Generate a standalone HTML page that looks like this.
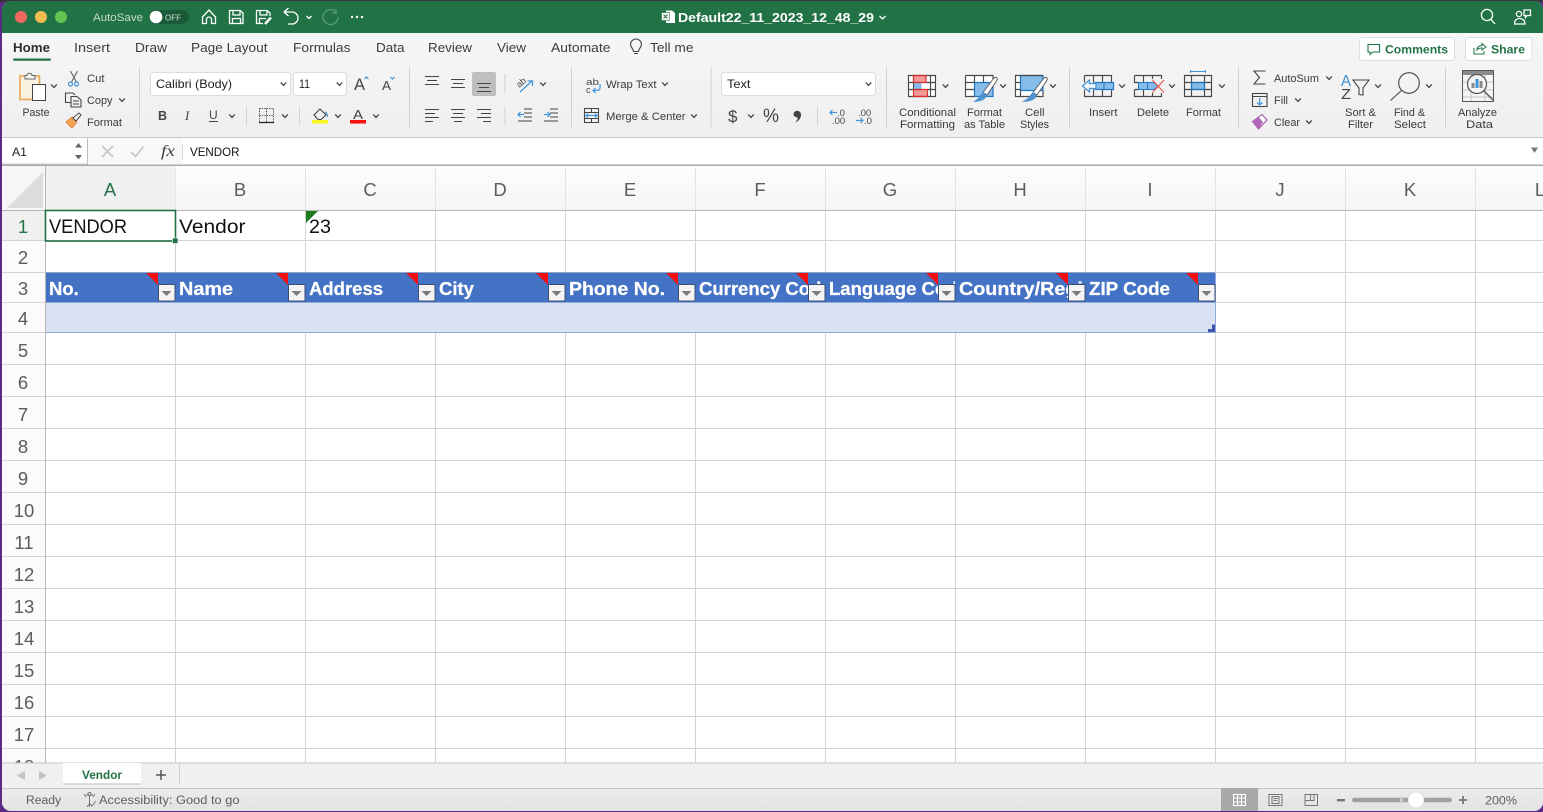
<!DOCTYPE html>
<html><head><meta charset="utf-8"><title>Excel</title>
<style>
html,body{margin:0;padding:0;background:#5b2a86;overflow:hidden}
svg{display:block}
text{font-family:"Liberation Sans",sans-serif;fill:#333}
.r{font-size:11px;fill:#3a3a3a}
.t{font-size:13px;fill:#3c3c3c}
.h{font-size:18.5px;fill:#5c5c5c;text-anchor:middle}
.b{font-size:18.5px;font-weight:bold;fill:#fff;stroke:#fff;stroke-width:.25}
.c{font-size:19.5px;fill:#111}
.i{fill:none;stroke:#444;stroke-width:1.1}
.bl{fill:none;stroke:#3f93d8;stroke-width:1.2}
.g{fill:none;stroke:#484848;stroke-width:1.15}
.sep{stroke:#d0d0d0;stroke-width:1}
.w{fill:none;stroke:#fff;stroke-width:1.3}
</style></head><body>
<svg width="1543" height="812" viewBox="0 0 1543 812" xmlns="http://www.w3.org/2000/svg">
<defs>
<path id="ch" d="M-2.8 -1.6L0 1.4L2.8 -1.6" fill="none" stroke="#444" stroke-width="1.3"/>
<linearGradient id="hd" x1="0" y1="0" x2="0" y2="1"><stop offset="0" stop-color="#fdfdfd"/><stop offset="1" stop-color="#f5f5f5"/></linearGradient>
<linearGradient id="rb" x1="0" y1="0" x2="0" y2="1"><stop offset="0" stop-color="#f6f6f6"/><stop offset="1" stop-color="#efefef"/></linearGradient>
<linearGradient id="st" x1="0" y1="0" x2="0" y2="1"><stop offset="0" stop-color="#ececec"/><stop offset="1" stop-color="#e2e2e2"/></linearGradient>
<clipPath id="win"><rect x="2" y="1" width="1541" height="810" rx="9"/></clipPath>
<clipPath id="cF"><rect x="695" y="273" width="130" height="30"/></clipPath>
<clipPath id="cG"><rect x="825" y="273" width="130" height="30"/></clipPath>
<clipPath id="cH"><rect x="955" y="273" width="130" height="30"/></clipPath>
<g id="fb"><rect x="0.5" y="0.5" width="16.5" height="16.5" fill="#f4f4f4" stroke="#3d4f72"/><path d="M3.5 7H13.5L8.5 12Z" fill="#7b7b7b"/></g>
<path id="red" d="M0 0H12V12Z" fill="#f40f0f"/>
</defs>
<rect width="1543" height="812" fill="#5b2a86"/>
<rect width="1543" height="2" fill="#33363a"/>
<g clip-path="url(#win)">
<rect x="2" y="1" width="1541" height="810" fill="#fff"/>
<!-- title bar -->
<rect x="2" y="1" width="1541" height="32" fill="#217346"/>
<circle cx="21" cy="17" r="6" fill="#ee6a5f"/><circle cx="41" cy="17" r="6" fill="#f5bd4f"/><circle cx="61" cy="17" r="6" fill="#61c454"/>
<text x="93" y="21" font-size="11" textLength="50" lengthAdjust="spacingAndGlyphs" style="fill:#c6dacd">AutoSave</text>
<rect x="149" y="10" width="40" height="14" rx="7" fill="#1b5a38"/><circle cx="156" cy="17" r="6.3" fill="#fff"/>
<text x="165" y="20.5" font-size="8.5" textLength="16" lengthAdjust="spacingAndGlyphs" style="fill:#cfe0d6">OFF</text>
<path class="w" d="M202.5 17L209 10L215.5 17V23.5H211.5V19.5A2.5 2.5 0 0 0 206.5 19.5V23.5H202.5Z"/>
<path class="w" d="M229.5 10.5H240L243 13V23.5H229.5ZM233 10.5V15H240V10.5M232.5 23.5V18.5H240.5V23.5"/>
<path class="w" d="M256.5 10.5H267L270 13V16M256.5 10.5V23.5H263M260 10.5V15H267V10.5M259.5 23.5V18.5H266"/>
<path d="M265 24L271 17.5" stroke="#fff" stroke-width="2.4"/>
<path class="w" d="M284 12H292A6 6 0 0 1 292 24H288M284 12L288.5 8M284 12L288.5 16"/>
<path d="M306.5 16L309 18.5L311.5 16" fill="none" stroke="#fff" stroke-width="1.3"/>
<path d="M336 12A7.5 7.5 0 1 0 338 17M336 9V13H332" fill="none" stroke="#5f9c7a" stroke-width="1.2"/>
<circle cx="352" cy="17" r="1.2" fill="#fff"/><circle cx="357" cy="17" r="1.2" fill="#fff"/><circle cx="362" cy="17" r="1.2" fill="#fff"/>
<path d="M666 10.5H672L675 13V23H666Z" fill="#fff"/><rect x="661.5" y="12.5" width="8" height="8" fill="#fff" stroke="#217346" stroke-width=".6"/><path d="M663.5 14.5L667.5 18.5M667.5 14.5L663.5 18.5" stroke="#217346"/>
<text x="678" y="22" font-size="13" font-weight="bold" textLength="196" lengthAdjust="spacingAndGlyphs" style="fill:#fff">Default22_11_2023_12_48_29</text>
<path d="M879.5 16L882.5 19L885.5 16" fill="none" stroke="#fff" stroke-width="1.3"/>
<circle cx="1487" cy="15" r="5.6" class="w"/><path class="w" d="M1491 19.5L1495 24"/>
<circle cx="1519" cy="14" r="2.6" class="w"/><path class="w" d="M1514.5 24H1525C1525 20 1522 18.5 1519.5 18.5S1514.5 20 1514.5 24ZM1524 10H1530.5V15.5H1527L1525.5 17.5V15.5H1524Z"/>
<!-- ribbon -->
<rect x="2" y="33" width="1541" height="104" fill="url(#rb)"/>
<rect x="2" y="137" width="1541" height="1" fill="#c9c9c9"/>
<text class="t" x="13" y="52" font-weight="bold" textLength="37" lengthAdjust="spacingAndGlyphs" style="fill:#2e2e2e">Home</text>
<text class="t" x="74" y="52" textLength="36" lengthAdjust="spacingAndGlyphs">Insert</text>
<text class="t" x="135" y="52" textLength="32" lengthAdjust="spacingAndGlyphs">Draw</text>
<text class="t" x="191" y="52" textLength="76.5" lengthAdjust="spacingAndGlyphs">Page Layout</text>
<text class="t" x="293" y="52" textLength="57.5" lengthAdjust="spacingAndGlyphs">Formulas</text>
<text class="t" x="376" y="52" textLength="28.5" lengthAdjust="spacingAndGlyphs">Data</text>
<text class="t" x="428" y="52" textLength="44" lengthAdjust="spacingAndGlyphs">Review</text>
<text class="t" x="497" y="52" textLength="29" lengthAdjust="spacingAndGlyphs">View</text>
<text class="t" x="551" y="52" textLength="59.5" lengthAdjust="spacingAndGlyphs">Automate</text>
<text class="t" x="650" y="52" textLength="43.5" lengthAdjust="spacingAndGlyphs">Tell me</text>
<rect x="13" y="58.5" width="38" height="2.2" rx="1" fill="#217346"/>
<path class="i" d="M633.5 51.5C633.5 48.5 630.5 47.5 630.5 44.5A5.5 5.5 0 0 1 641.5 44.5C641.5 47.5 638.5 48.5 638.5 51.5ZM634 53.5H638"/>
<rect x="1359.5" y="37.5" width="95" height="23" rx="3" fill="#fff" stroke="#dedede"/>
<path d="M1368 44.5H1379.5V52H1373L1370 54.5V52H1368Z" fill="none" stroke="#217346" stroke-width="1.1"/>
<text x="1385" y="53.5" font-size="12" font-weight="bold" textLength="63" lengthAdjust="spacingAndGlyphs" style="fill:#217346">Comments</text>
<rect x="1465.5" y="37.5" width="66.5" height="23" rx="3" fill="#fff" stroke="#dedede"/>
<path d="M1474 48V54H1484V51M1477 50C1477 46.5 1480 45.5 1482 45.5V43.5L1486 47L1482 50V48C1480 48 1478 48.5 1477 50Z" fill="none" stroke="#217346" stroke-width="1"/>
<text x="1491" y="53.5" font-size="12" font-weight="bold" textLength="34" lengthAdjust="spacingAndGlyphs" style="fill:#217346">Share</text>
<!-- clipboard -->
<rect x="20" y="76" width="19.5" height="23.5" fill="#fbf1df" stroke="#e9a553" stroke-width="1.6"/>
<path d="M25 79V75.5H27C27 72.5 32 72.5 32 75.5H35V79Z" fill="#f4f4f4" stroke="#666"/>
<rect x="32.5" y="84.5" width="13" height="16" fill="#fff" stroke="#444"/>
<use href="#ch" x="54" y="86"/>
<text class="r" x="22.5" y="116" textLength="27" lengthAdjust="spacingAndGlyphs">Paste</text>
<path d="M70.5 71L76.5 82M77.5 71L71.5 82" stroke="#555" fill="none"/><circle cx="70.5" cy="84" r="2" class="bl"/><circle cx="76.5" cy="84" r="2" class="bl"/>
<text class="r" x="87" y="82" textLength="17.5" lengthAdjust="spacingAndGlyphs">Cut</text>
<path class="i" d="M70.5 102.5H65.5V93H73L75 95M71 96.5H77L81 100V107H71ZM73 101H79M73 104H79"/>
<text class="r" x="87" y="104" textLength="25.5" lengthAdjust="spacingAndGlyphs">Copy</text><use href="#ch" x="122" y="100"/>
<path d="M66 122L72 117L77 122L72 128Z" fill="#f3a457" stroke="#e8853a"/>
<path d="M73 118L79 113L81 115L76 121Z" fill="#fff" stroke="#444"/>
<text class="r" x="87" y="126" textLength="35" lengthAdjust="spacingAndGlyphs">Format</text>
<line class="sep" x1="139.5" y1="67" x2="139.5" y2="128"/>
<!-- font -->
<rect x="150.5" y="72.5" width="140" height="23" rx="3" fill="#fff" stroke="#dcdcdc"/>
<text x="156" y="88" font-size="12" textLength="76" lengthAdjust="spacingAndGlyphs" style="fill:#222">Calibri (Body)</text><use href="#ch" x="283.5" y="84"/>
<rect x="293.5" y="72.5" width="53" height="23" rx="3" fill="#fff" stroke="#dcdcdc"/>
<text x="299" y="88" font-size="12" textLength="11" lengthAdjust="spacingAndGlyphs" style="fill:#222">11</text><use href="#ch" x="339.5" y="84"/>
<text x="354" y="90" font-size="17" textLength="11" lengthAdjust="spacingAndGlyphs" style="fill:#444">A</text><path d="M364.5 79L366.5 77L368.5 79" class="bl"/>
<text x="382" y="90" font-size="13" textLength="9" lengthAdjust="spacingAndGlyphs" style="fill:#444">A</text><path d="M390.5 77L392.5 79L394.5 77" class="bl"/>
<text x="158" y="120" font-size="12.5" font-weight="bold" style="fill:#444">B</text>
<text x="185" y="120" font-size="13" font-style="italic" style="fill:#444;font-family:'Liberation Serif',serif">I</text>
<text x="209" y="119" font-size="12" style="fill:#444">U</text><line x1="209" y1="121.5" x2="218" y2="121.5" stroke="#444"/>
<use href="#ch" x="232" y="116"/>
<line class="sep" x1="246.5" y1="107" x2="246.5" y2="125"/>
<path d="M259.5 108.5H273.5V122M259.5 108.5V122M266.5 108.5V122M259.5 115.5H273.5" fill="none" stroke="#444" stroke-dasharray="1.2 1.2"/><line x1="259" y1="122.5" x2="274" y2="122.5" stroke="#222" stroke-width="1.2"/>
<use href="#ch" x="285" y="116"/>
<line class="sep" x1="299.5" y1="107" x2="299.5" y2="125"/>
<path class="i" d="M314 115L320 109L326 115L321 119.5H318Z"/><path d="M325 112C327 113 327.5 115 327.5 117" class="bl"/>
<rect x="312" y="120" width="16" height="3.6" fill="#fbf424"/><use href="#ch" x="338" y="116"/>
<text x="353" y="119" font-size="13" textLength="10" lengthAdjust="spacingAndGlyphs" style="fill:#444">A</text><rect x="350" y="120" width="16" height="3.6" fill="#f81414"/><use href="#ch" x="376" y="116"/>
<line class="sep" x1="409.5" y1="67" x2="409.5" y2="128"/>
<!-- alignment -->
<rect x="472" y="72" width="24" height="24" rx="2" fill="#bfbfbf"/>
<path class="i" d="M425 76.5H439M427 80.5H437M425 84.5H439M451 79.5H465M453 83.5H463M451 87.5H465M477 83.5H491M479 87.5H489M477 91.5H491"/>
<path class="i" d="M425 109.5H439M425 113.5H435M425 117.5H439M425 121.5H433M451 109.5H465M453 113.5H463M451 117.5H465M454 121.5H462M477 109.5H491M481 113.5H491M477 117.5H491M483 121.5H491"/>
<line class="sep" x1="505" y1="74" x2="505" y2="93"/><line class="sep" x1="505" y1="107" x2="505" y2="125"/>
<text x="517" y="86" font-size="9" transform="rotate(-40 521 84)" style="fill:#444">ab</text><path class="bl" d="M520 92L532 81M527.5 81H532.5V86"/>
<use href="#ch" x="543" y="84"/>
<path class="i" d="M524 109H532M524 113H532M524 117H532M518 121H532"/><path class="bl" d="M518 114.5H524M520.5 112L518 114.5L520.5 117"/>
<path class="i" d="M550 109H558M550 113H558M550 117H558M544 121H558"/><path class="bl" d="M544 114.5H550M547.5 112L550 114.5L547.5 117"/>
<line class="sep" x1="571.5" y1="67" x2="571.5" y2="128"/>
<text x="586" y="85" font-size="9.5" textLength="13" lengthAdjust="spacingAndGlyphs" style="fill:#444">ab</text><text x="586" y="93" font-size="9.5" style="fill:#444">c</text><path class="bl" d="M600 84V88C600 90 598 90.5 596 90.5H593M595.5 88L593 90.5L595.5 93"/>
<text class="r" x="606" y="88" textLength="50.5" lengthAdjust="spacingAndGlyphs">Wrap Text</text><use href="#ch" x="665" y="84"/>
<path class="i" d="M584.5 108.5H598.5V122.5H584.5ZM584.5 112.5H598.5M584.5 118.5H598.5M591.5 108.5V112.5M591.5 118.5V122.5"/><path class="bl" d="M586 115.5H597M588 113.5L586 115.5L588 117.5M595 113.5L597 115.5L595 117.5"/>
<text class="r" x="606" y="120" textLength="79.5" lengthAdjust="spacingAndGlyphs">Merge &amp; Center</text><use href="#ch" x="694" y="116"/>
<line class="sep" x1="711" y1="67" x2="711" y2="128"/>
<!-- number -->
<rect x="721.5" y="72.5" width="154" height="23" rx="3" fill="#fff" stroke="#dcdcdc"/>
<text x="727" y="88" font-size="12" textLength="23.5" lengthAdjust="spacingAndGlyphs" style="fill:#222">Text</text><use href="#ch" x="868.5" y="84"/>
<text x="728" y="122" font-size="17" style="fill:#444">$</text><use href="#ch" x="751" y="116"/>
<text x="763" y="122" font-size="19" textLength="16" lengthAdjust="spacingAndGlyphs" style="fill:#444">%</text>
<path d="M793.5 114A3.6 3.6 0 1 1 801 115C801 118 799 121 795 122.5C797.5 120 798 118.5 797.5 117.5C795.5 117.5 793.5 116 793.5 114Z" fill="#444"/>
<line class="sep" x1="817.5" y1="107" x2="817.5" y2="125"/>
<text x="837" y="116" font-size="9.5" style="fill:#444">.0</text><text x="832" y="124" font-size="9.5" style="fill:#444">.00</text><path class="bl" d="M830 112.5H837M832.5 110L830 112.5L832.5 115"/>
<text x="858" y="116" font-size="9.5" style="fill:#444">.00</text><text x="864" y="124" font-size="9.5" style="fill:#444">.0</text><path class="bl" d="M856 120.5H863M860.5 118L863 120.5L860.5 123"/>
<line class="sep" x1="886.5" y1="67" x2="886.5" y2="128"/>
<!-- conditional -->
<rect x="908.5" y="75.5" width="27" height="21" fill="#fff"/>
<rect x="913.5" y="75.5" width="12.5" height="7" fill="#f89a9a"/><rect x="913.5" y="89.5" width="14" height="7" fill="#f89a9a"/><rect x="913.5" y="82.5" width="8" height="7" fill="#85bce9"/>
<path class="g" d="M908.5 75.5H935.5V96.5H908.5ZM908.5 82.5H913.5M926 82.5H935.5M921.5 89.5H913.5M927.5 89.5H935.5M908.5 89.5H913.5M930.5 75.5V96.5"/>
<path d="M913.5 75.5H926V82.5H913.5ZM913.5 89.5H927.5V96.5H913.5Z" fill="none" stroke="#d9302e" stroke-width="1.2"/>
<path d="M913.5 82.5V89.5" stroke="#484848"/>
<use href="#ch" x="945.5" y="86"/>
<text class="r" x="899" y="116" textLength="57" lengthAdjust="spacingAndGlyphs">Conditional</text><text class="r" x="900" y="128" textLength="55" lengthAdjust="spacingAndGlyphs">Formatting</text>
<rect x="965.5" y="75.5" width="27.5" height="21" fill="#fff"/>
<rect x="974.5" y="82.5" width="18.5" height="14" fill="#85bce9" stroke="#1f76c4" stroke-width="1.2"/>
<path class="g" d="M965.5 75.5H993V82.5M965.5 75.5V96.5H974.5M965.5 82.5H974.5M965.5 89.5H974.5M974.5 75.5V82.5M983.5 75.5V82.5"/>
<path d="M983 92.5L993.5 78.5Q995.5 76.5 996.8 77.7Q998 79 996.5 81L987 95Z" fill="#fff" stroke="#555" stroke-width=".9"/>
<path d="M973 101.5C977 102.5 985 101 987 95.5L983.5 92C980 93.5 980 98.5 973 101.5Z" fill="#4e93d0"/>
<use href="#ch" x="1003" y="86"/>
<text class="r" x="967" y="116" textLength="35" lengthAdjust="spacingAndGlyphs">Format</text><text class="r" x="964" y="128" textLength="41" lengthAdjust="spacingAndGlyphs">as Table</text>
<rect x="1015.5" y="75.5" width="27.5" height="21" fill="#fff"/>
<rect x="1020.5" y="75.5" width="22.5" height="15" fill="#85bce9" stroke="#1f76c4" stroke-width="1.2"/>
<path class="g" d="M1020.5 75.5H1015.5V96.5H1043V90.5M1015.5 82.5H1020.5M1015.5 89.5H1020.5M1020.5 90.5V96.5M1043 75.5H1020.5"/>
<path d="M1033 92.5L1043.5 78.5Q1045.5 76.5 1046.8 77.7Q1048 79 1046.5 81L1037 95Z" fill="#fff" stroke="#555" stroke-width=".9"/>
<path d="M1022 101.5C1026 102.5 1035 101 1037 95.5L1033.5 92C1030 93.5 1030 98.5 1022 101.5Z" fill="#4e93d0"/>
<use href="#ch" x="1053" y="86"/>
<text class="r" x="1025" y="116" textLength="19.5" lengthAdjust="spacingAndGlyphs">Cell</text><text class="r" x="1020" y="128" textLength="29" lengthAdjust="spacingAndGlyphs">Styles</text>
<line class="sep" x1="1069.5" y1="67" x2="1069.5" y2="128"/>
<!-- insert -->
<path class="g" d="M1084.5 75.5H1111.5V82.5M1084.5 75.5V82.5M1084.5 89.5V96.5H1111.5V89.5M1093.5 75.5V82.5M1102.5 75.5V82.5M1093.5 89.5V96.5M1102.5 89.5V96.5"/>
<rect x="1095" y="82.5" width="18.5" height="7" fill="#85bce9" stroke="#1f76c4" stroke-width="1.2"/>
<path d="M1104 82.5V89.5" stroke="#1f76c4"/>
<path d="M1082.5 86L1089.5 80V83.5H1096V88.5H1089.5V92Z" fill="#eef6fc" stroke="#3f93d8" stroke-width="1.2"/>
<use href="#ch" x="1122" y="86"/><text class="r" x="1089" y="116" textLength="28.5" lengthAdjust="spacingAndGlyphs">Insert</text>
<!-- delete -->
<path class="g" d="M1134.5 75.5H1161.5V79M1134.5 75.5V82.5H1138M1134.5 89.5H1138M1134.5 89.5V96.5H1161.5V93M1143.5 75.5V82.5M1152.5 75.5V79M1143.5 89.5V96.5M1152.5 93V96.5"/>
<path d="M1138.5 82.5H1154L1158 86L1154 89.5H1138.5Z" fill="#85bce9" stroke="#1f76c4"/>
<path d="M1147.5 82.5V89.5" stroke="#1f76c4"/>
<path d="M1152.5 80L1164 92.5M1164 80L1152.5 92.5" stroke="#ee5c4a" stroke-width="1.2"/>
<use href="#ch" x="1172" y="86"/><text class="r" x="1137" y="116" textLength="32" lengthAdjust="spacingAndGlyphs">Delete</text>
<!-- format -->
<path d="M1190.5 71.5H1205.5M1190.5 70V73M1205.5 70V73" stroke="#3f93d8" fill="none"/>
<rect x="1191.5" y="82.5" width="13" height="7" fill="#85bce9"/>
<path class="g" d="M1184.5 75.5H1211.5V96.5H1184.5ZM1184.5 82.5H1211.5M1184.5 89.5H1211.5M1191.5 75.5V96.5M1204.5 75.5V96.5"/>
<rect x="1191.5" y="82.5" width="13" height="7" fill="none" stroke="#1f76c4" stroke-width="1.2"/>
<use href="#ch" x="1222" y="86"/><text class="r" x="1186" y="116" textLength="35" lengthAdjust="spacingAndGlyphs">Format</text>
<line class="sep" x1="1238.5" y1="67" x2="1238.5" y2="128"/>
<!-- editing -->
<path class="i" d="M1265.5 71H1254L1259.5 77.5L1254 84H1265.5"/>
<text class="r" x="1274" y="82" textLength="45" lengthAdjust="spacingAndGlyphs">AutoSum</text><use href="#ch" x="1329" y="78"/>
<rect x="1252.5" y="93.5" width="14.5" height="13" class="i"/><path class="i" d="M1252.5 96.5H1267"/><path class="bl" d="M1259.7 98V105M1257 102.5L1259.7 105L1262.5 102.5"/>
<text class="r" x="1274" y="104" textLength="14" lengthAdjust="spacingAndGlyphs">Fill</text><use href="#ch" x="1298" y="100"/>
<path d="M1252.5 121.5L1262 114.5L1267 120L1258.5 129Z" fill="#fff" stroke="#a04aa8"/><path d="M1252.5 121.5L1258 116.5L1263 122L1258.5 129Z" fill="#b068b8"/>
<text class="r" x="1274" y="126" textLength="26" lengthAdjust="spacingAndGlyphs">Clear</text><use href="#ch" x="1309" y="122"/>
<text x="1341" y="86" font-size="16" textLength="10" lengthAdjust="spacingAndGlyphs" style="fill:#3f93d8">A</text><text x="1341" y="99" font-size="15" textLength="10" lengthAdjust="spacingAndGlyphs" style="fill:#444">Z</text>
<path class="i" d="M1353 80H1369L1363 88V95L1359 94.5V88Z"/><use href="#ch" x="1378" y="86"/>
<text class="r" x="1345" y="116" textLength="31" lengthAdjust="spacingAndGlyphs">Sort &amp;</text><text class="r" x="1348" y="128" textLength="25" lengthAdjust="spacingAndGlyphs">Filter</text>
<circle cx="1409" cy="83" r="10.3" class="i"/><path class="i" d="M1401.5 90.5L1390.5 100.5"/><use href="#ch" x="1429" y="86"/>
<text class="r" x="1394" y="116" textLength="31" lengthAdjust="spacingAndGlyphs">Find &amp;</text><text class="r" x="1394" y="128" textLength="32" lengthAdjust="spacingAndGlyphs">Select</text>
<line class="sep" x1="1445.5" y1="67" x2="1445.5" y2="128"/>
<rect x="1462.5" y="70.5" width="31" height="31" fill="#f5f5f5" stroke="#555"/><rect x="1463" y="71" width="30" height="4" fill="#8a8a8a"/>
<path d="M1463 82H1493M1463 90H1493M1463 97H1493M1471 75V101M1485 75V101" stroke="#c4c4c4" fill="none"/>
<circle cx="1477" cy="84" r="9.5" fill="#f5f5f5" stroke="#555" stroke-width="1.2"/><path d="M1484 91L1493 100" stroke="#555" stroke-width="1.4"/>
<rect x="1471.5" y="83" width="3" height="5" fill="#888"/><rect x="1475.5" y="79" width="3" height="9" fill="#3f93d8"/><rect x="1479.5" y="81" width="3" height="7" fill="#888"/>
<text class="r" x="1458" y="116" textLength="39" lengthAdjust="spacingAndGlyphs">Analyze</text><text class="r" x="1466" y="128" textLength="27" lengthAdjust="spacingAndGlyphs">Data</text>
<!-- formula bar -->
<rect x="2" y="138" width="1541" height="27" fill="#fff"/>
<rect x="87" y="138" width="1" height="26" fill="#bdbdbd"/><rect x="2" y="163.5" width="86" height="1" fill="#cfcfcf"/>
<rect x="88" y="138" width="94" height="26" fill="#f8f8f8"/>
<text x="12" y="156" font-size="12" textLength="15" lengthAdjust="spacingAndGlyphs" style="fill:#222">A1</text>
<path d="M75 147.5L78.5 143L82 147.5ZM75 155L78.5 159.5L82 155Z" fill="#666"/>
<path d="M102 146L113 157M113 146L102 157" stroke="#c6c6c6" stroke-width="1.6"/>
<path d="M131 152L135.5 156.5L143.5 146.5" fill="none" stroke="#c6c6c6" stroke-width="1.6"/>
<text x="161" y="156" font-size="16" font-style="italic" textLength="14" lengthAdjust="spacingAndGlyphs" style="font-family:'Liberation Serif',serif;fill:#444">fx</text>
<rect x="182" y="144" width="1" height="16" fill="#d6d6d6"/>
<text x="190" y="156" font-size="12" textLength="49.5" lengthAdjust="spacingAndGlyphs" style="fill:#111">VENDOR</text>
<path d="M1531 147.5H1538L1534.5 153Z" fill="#777"/>
<rect x="2" y="164.5" width="1541" height="1.5" fill="#a9a9a9"/>
<!-- headers -->
<rect x="2" y="166" width="1541" height="44" fill="url(#hd)"/>
<rect x="2" y="166" width="43" height="44" fill="#f6f6f6"/>
<path d="M7 208L43 172V208Z" fill="#dcdcdc"/>
<rect x="46" y="166" width="129" height="44" fill="#f0f0f0"/>
<rect x="2" y="210" width="43" height="553" fill="#fbfbfb"/>
<rect x="2" y="211" width="43" height="30" fill="#f0f0f0"/>
<!-- grid -->
<path d="M175.5 211V763M305.5 211V763M435.5 211V763M565.5 211V763M695.5 211V763M825.5 211V763M955.5 211V763M1085.5 211V763M1215.5 211V763M1345.5 211V763M1475.5 211V763" stroke="#d4d4d4" fill="none"/>
<path d="M175.5 168V210M305.5 168V210M435.5 168V210M565.5 168V210M695.5 168V210M825.5 168V210M955.5 168V210M1085.5 168V210M1215.5 168V210M1345.5 168V210M1475.5 168V210" stroke="#e3e3e3" fill="none"/>
<path d="M2 240.5H1543M2 272.5H1543M2 302.5H1543M2 332.5H1543M2 364.5H1543M2 396.5H1543M2 428.5H1543M2 460.5H1543M2 492.5H1543M2 524.5H1543M2 556.5H1543M2 588.5H1543M2 620.5H1543M2 652.5H1543M2 684.5H1543M2 716.5H1543M2 748.5H1543" stroke="#d4d4d4" fill="none"/>
<rect x="2" y="210" width="1541" height="1" fill="#b5b5b5"/>
<rect x="45" y="166" width="1" height="597" fill="#b5b5b5"/>
<text class="h" x="110" y="196" style="fill:#217346">A</text><text class="h" x="240" y="196">B</text><text class="h" x="370" y="196">C</text><text class="h" x="500" y="196">D</text><text class="h" x="630" y="196">E</text><text class="h" x="760" y="196">F</text><text class="h" x="890" y="196">G</text><text class="h" x="1020" y="196">H</text><text class="h" x="1150" y="196">I</text><text class="h" x="1280" y="196">J</text><text class="h" x="1410" y="196">K</text><text class="h" x="1540" y="196">L</text>
<text class="h" x="23" y="233" style="fill:#217346">1</text><text class="h" x="23" y="264">2</text><text class="h" x="23" y="295">3</text><text class="h" x="23" y="325">4</text><text class="h" x="23" y="357">5</text><text class="h" x="23" y="389">6</text><text class="h" x="23" y="421">7</text><text class="h" x="23" y="453">8</text><text class="h" x="23" y="485">9</text><text class="h" x="24" y="517">10</text><text class="h" x="24" y="549">11</text><text class="h" x="24" y="581">12</text><text class="h" x="24" y="613">13</text><text class="h" x="24" y="645">14</text><text class="h" x="24" y="677">15</text><text class="h" x="24" y="709">16</text><text class="h" x="24" y="741">17</text><text class="h" x="24" y="773">18</text>
<!-- cells -->
<text class="c" x="49" y="233" textLength="78" lengthAdjust="spacingAndGlyphs">VENDOR</text>
<text class="c" x="179" y="233" textLength="66.5" lengthAdjust="spacingAndGlyphs">Vendor</text>
<text class="c" x="309" y="233" textLength="22" lengthAdjust="spacingAndGlyphs">23</text>
<path d="M306 211H318L306 223Z" fill="#1d7a1d"/>
<rect x="45.5" y="210.5" width="130" height="30.5" fill="none" stroke="#217346" stroke-width="1.6"/>
<rect x="172.5" y="238" width="5.5" height="5.5" fill="#217346" stroke="#fff" stroke-width=".6"/>
<!-- table -->
<rect x="46" y="272.5" width="1170" height="30" fill="#4472c4"/>
<rect x="46" y="302.5" width="1170" height="30" fill="#d9e1f2"/>
<path d="M46 332.5H1215.5V272.5" fill="none" stroke="#8ea9db"/>
<text class="b" x="49" y="295">No.</text><text class="b" x="179" y="295" textLength="54" lengthAdjust="spacingAndGlyphs">Name</text><text class="b" x="309" y="295">Address</text><text class="b" x="439" y="295">City</text><text class="b" x="569" y="295" textLength="96" lengthAdjust="spacingAndGlyphs">Phone No.</text>
<g clip-path="url(#cF)"><text class="b" x="699" y="295">Currency Code</text></g>
<g clip-path="url(#cG)"><text class="b" x="829" y="295">Language Code</text></g>
<g clip-path="url(#cH)"><text class="b" x="959" y="295" textLength="148" lengthAdjust="spacingAndGlyphs">Country/Region</text></g>
<text class="b" x="1089" y="295" textLength="81" lengthAdjust="spacingAndGlyphs">ZIP Code</text>
<use href="#red" x="146" y="273"/><use href="#red" x="276" y="273"/><use href="#red" x="406" y="273"/><use href="#red" x="536" y="273"/><use href="#red" x="666" y="273"/><use href="#red" x="796" y="273"/><use href="#red" x="926" y="273"/><use href="#red" x="1056" y="273"/><use href="#red" x="1186" y="273"/>
<use href="#fb" x="158" y="284"/><use href="#fb" x="288" y="284"/><use href="#fb" x="418" y="284"/><use href="#fb" x="548" y="284"/><use href="#fb" x="678" y="284"/><use href="#fb" x="808" y="284"/><use href="#fb" x="938" y="284"/><use href="#fb" x="1068" y="284"/><use href="#fb" x="1198" y="284"/>
<path d="M1208 332H1215V324.5H1212V329H1208Z" fill="#3f56b0"/>
<!-- tabs -->
<rect x="2" y="763" width="1541" height="25" fill="#f0f0f0"/>
<rect x="2" y="762.5" width="1541" height="1" fill="#c6c6c6"/>
<path d="M25 771V780L16.5 775.5ZM39 771V780L47 775.5Z" fill="#c4c4c4"/>
<path d="M63 763H141V782A2 2 0 0 1 139 784H65A2 2 0 0 1 63 782Z" fill="#fff"/><path d="M63 784H141" stroke="#bdbdbd"/>
<text x="82" y="779" font-size="11.5" font-weight="bold" textLength="40" lengthAdjust="spacingAndGlyphs" style="fill:#217346">Vendor</text>
<path d="M156 775H166M161 770V780" stroke="#555" stroke-width="1.5"/>
<rect x="179" y="764" width="1" height="20" fill="#cfcfcf"/>
<!-- status -->
<rect x="2" y="788" width="1541" height="24" fill="url(#st)"/>
<rect x="2" y="788" width="1541" height="1" fill="#c4c4c4"/>
<text x="26" y="804" font-size="11.5" textLength="35" lengthAdjust="spacingAndGlyphs" style="fill:#5d5d5d">Ready</text>
<path d="M86 795H93M89.5 795V807M84 794L86 797M95 794L93 797M87 807L90 803" fill="none" stroke="#777"/><circle cx="89.5" cy="794" r="1.6" fill="none" stroke="#777"/><path d="M90 804L92 806L96 801" fill="none" stroke="#777"/>
<text x="99" y="804" font-size="11.5" textLength="140.5" lengthAdjust="spacingAndGlyphs" style="fill:#5d5d5d">Accessibility: Good to go</text>
<rect x="1221" y="788" width="37" height="24" fill="#a9a9a9"/>
<path d="M1233.5 794.5H1245.5V805.5H1233.5ZM1233.5 798H1245.5M1233.5 802H1245.5M1237.5 794.5V805.5M1241.5 794.5V805.5" fill="#a9a9a9" stroke="#fff"/>
<path d="M1269 794.5H1282V805.5H1269ZM1272 796.5H1279V803.5H1272ZM1273.5 798.5H1277.5M1273.5 800.5H1277.5" fill="none" stroke="#777"/>
<path d="M1305 794.5H1317.5V805.5H1305ZM1305 800.5H1310.5V794.5M1314 794.5V800.5H1310.5" fill="none" stroke="#777"/>
<rect x="1337" y="799" width="8" height="2.4" fill="#777"/>
<rect x="1352" y="797.8" width="100" height="4.4" rx="2.2" fill="#a0a0a0"/><rect x="1400" y="798.5" width="3" height="3" fill="#d8d8d8"/>
<circle cx="1416" cy="800" r="8" fill="#fff" stroke="#d0d0d0" stroke-width=".6"/>
<path d="M1459 800H1467M1463 796V804" stroke="#777" stroke-width="1.8"/>
<text x="1485" y="804.5" font-size="11.5" textLength="32" lengthAdjust="spacingAndGlyphs" style="fill:#5d5d5d">200%</text>
</g>
</svg>
</body></html>
